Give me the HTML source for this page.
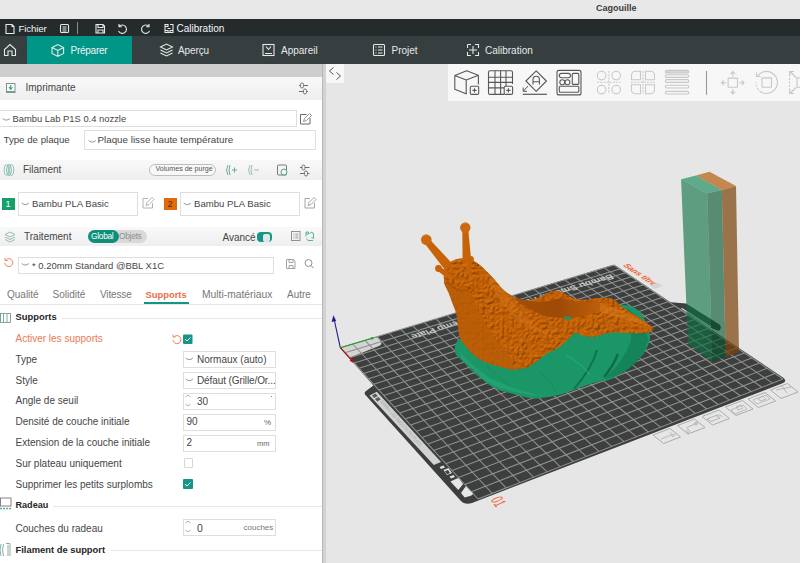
<!DOCTYPE html>
<html><head><meta charset="utf-8">
<style>
*{margin:0;padding:0;box-sizing:border-box}
html,body{width:800px;height:563px;overflow:hidden;background:#e6e6e6;font-family:"Liberation Sans",sans-serif;position:relative}
.a{position:absolute}
.t{position:absolute;white-space:nowrap;line-height:1;font-size:10px;color:#464646;z-index:2}
svg{position:absolute;overflow:visible;z-index:1}
.hdr{position:absolute;left:0;width:322px;background:linear-gradient(#f9f9f9,#eeeeee)}
.box{position:absolute;border:1px solid #dedede;background:#fff}
.wt{color:#f2f2f2}
.ic{stroke:#e8e8e8;fill:none;stroke-width:1.1}
.gi{stroke:#6b6b6b;fill:none;stroke-width:1}
.di{stroke:#c9c9c9;fill:none;stroke-width:1.2}
</style></head><body>
<!-- title bar -->
<div class="a" style="left:0;top:0;width:800px;height:19px;background:#e8e8e8"></div>
<div class="t" style="left:596px;top:4px;font-size:9px;font-weight:bold;color:#3c3c3c">Cagouille</div>
<!-- menu bar -->
<div class="a" style="left:0;top:19px;width:800px;height:17px;background:#252b2d"></div>
<svg style="left:0;top:19px" width="240" height="17">
 <path class="ic" d="M6 5.5h6l2 2v7h-8z M12 5.5v2h2"/>
 <rect class="ic" x="60.5" y="5.5" width="8" height="8" rx="1"/>
 <path class="ic" d="M62.5 8h4M62.5 10h4M62.5 12h4" stroke-width="0.9"/>
 <path d="M77.5 3v12" stroke="#8a8f90" stroke-width="1"/>
 <path class="ic" d="M96 5.5h7l1.5 1.5v7h-8.5z M98 5.5v3h5v-3 M98 14v-3h5v3"/>
 <path class="ic" d="M119 7.5a4.2 4.2 0 1 1 -0.5 4.5 M119 5v2.8h2.8"/>
 <path class="ic" d="M149 7.5a4.2 4.2 0 1 0 0.5 4.5 M149 5v2.8h-2.8"/>
 <path class="ic" d="M165 5.5h3v2h-3zM165 5.5v8h8v-8h-3M170 5.5h3v2M165 11.5h3v2M170 13.5v-2h3M167.5 9.5h3"/>
</svg>
<div class="t wt" style="left:18.5px;top:23.5px;font-size:9.6px;color:#f4f6f6;letter-spacing:-0.1px">Fichier</div>
<div class="t wt" style="left:176.5px;top:23.5px;font-size:10px;color:#f4f6f6">Calibration</div>
<!-- tab bar -->
<div class="a" style="left:0;top:36px;width:800px;height:28px;background:#363e40"></div>
<div class="a" style="left:27px;top:36px;width:105px;height:28px;background:#009687"></div>
<svg style="left:0;top:36px" width="560" height="28">
 <path class="ic" d="M4.5 19.5v-6l5.5-5 5.5 5v6h-3.5v-4.5h-4v4.5z"/>
 <path class="ic" d="M52 11.5l5.8-3 5.8 3v6l-5.8 3-5.8-3z M52 11.5l5.8 3 5.8-3 M57.8 14.5v6"/>
 <path class="ic" d="M160.5 11l6-3 6 3-6 3z M160.5 14l6 3 6-3 M160.5 17l6 3 6-3"/>
 <rect class="ic" x="263" y="8.5" width="11" height="11"/>
 <path class="ic" d="M265 17.5h7 M266 10.5l2.5 3 2.5-3"/>
 <rect class="ic" x="373.5" y="8.5" width="11" height="11" rx="1"/>
 <path class="ic" d="M375.5 11h1M378 11h4.5M375.5 14h1M378 14h4.5M375.5 17h1M378 17h4.5"/>
 <path class="ic" d="M467.5 8.5h3.5M475 8.5h3.5v3.5M478.5 16v3.5H475M471 19.5h-3.5V16M467.5 12V8.5 M473 10v8M469 14h8"/>
</svg>
<div class="t" style="left:70.5px;top:45.5px;font-size:10px;color:#f0f4f3;letter-spacing:-0.25px">Préparer</div>
<div class="t" style="left:178px;top:45.5px;font-size:10px;color:#e6e9e9;letter-spacing:-0.1px">Aperçu</div>
<div class="t" style="left:281px;top:45.5px;font-size:10px;color:#e6e9e9">Appareil</div>
<div class="t" style="left:391.5px;top:45.5px;font-size:10px;color:#e6e9e9">Projet</div>
<div class="t" style="left:485px;top:45.5px;font-size:10px;color:#e6e9e9">Calibration</div>

<!-- left panel -->
<div class="a" style="left:0;top:64px;width:322px;height:499px;background:#fff"></div>
<div class="a" style="left:0;top:64px;width:322px;height:13px;background:#cecece"></div>
<div class="a" style="left:322px;top:64px;width:4px;height:499px;background:#d2d2d2"></div>
<div class="a" style="left:322px;top:64px;width:1px;height:499px;background:#b8b8b8"></div>

<!-- Imprimante -->
<div class="hdr" style="top:77px;height:23px"></div>
<svg style="left:0;top:77px" width="322" height="23">
 <rect x="6.5" y="6.5" width="8.5" height="9" fill="#fafafa" stroke="#8e8e8e" stroke-width="1"/>
 <path d="M7 14.5h8" stroke="#4fb09a" stroke-width="1"/>
 <path d="M10.7 8v4.5M9 10l1.7 2.5 1.7-2.5" stroke="#159a86" stroke-width="1" fill="none"/>
 <path class="gi" d="M299 8.5h9M299 14.5h9"/>
 <rect x="300.5" y="6" width="3" height="5" rx="1.5" fill="#f2f2f2" stroke="#6b6b6b" stroke-width="0.9"/>
 <rect x="303.5" y="12" width="3" height="5" rx="1.5" fill="#f2f2f2" stroke="#6b6b6b" stroke-width="0.9"/>
</svg>
<div class="t" style="left:25.5px;top:83px">Imprimante</div>

<div class="box" style="left:-2px;top:110px;width:299px;height:17px"></div>
<svg style="left:0;top:105px" width="322" height="50">
 <path d="M2.7 13.5q3.6 3.2 7.2 0" stroke="#888" fill="none" stroke-width="0.9"/>
 <path class="gi" d="M300.5 9.5h6M300.5 9.5v9.5h9.5v-6" stroke="#8a8a8a"/>
 <path d="M303.5 16.5l1-3 5-5 2 2-5 5z" stroke="#8a8a8a" fill="none" stroke-width="0.9"/>
 <path d="M88.7 35.5q3.6 3.2 7.2 0" stroke="#888" fill="none" stroke-width="0.9"/>
</svg>
<div class="t" style="left:12.5px;top:114px;font-size:9.4px">Bambu Lab P1S 0.4 nozzle</div>
<div class="t" style="left:3.5px;top:134.6px;font-size:9.7px">Type de plaque</div>
<div class="box" style="left:84px;top:130px;width:232px;height:19.5px"></div>
<div class="t" style="left:97.5px;top:134.6px;font-size:9.8px">Plaque lisse haute température</div>

<!-- Filament -->
<div class="hdr" style="top:160px;height:20px"></div>
<svg style="left:0;top:160px" width="322" height="20">
 <ellipse cx="6.5" cy="10" rx="2.3" ry="5.5" fill="none" stroke="#7ab5a8" stroke-width="0.8"/>
 <ellipse cx="9" cy="10" rx="2.3" ry="5.5" fill="none" stroke="#5aa897" stroke-width="0.8"/>
 <ellipse cx="11.5" cy="10" rx="2.3" ry="5.5" fill="none" stroke="#7ab5a8" stroke-width="0.8"/>
 <path class="gi" d="M300 7.5h9.5M300 13.5h9.5"/>
 <rect x="302" y="5" width="3" height="5" rx="1.5" fill="#f2f2f2" stroke="#6b6b6b" stroke-width="0.9"/>
 <rect x="304.5" y="11" width="3" height="5" rx="1.5" fill="#f2f2f2" stroke="#6b6b6b" stroke-width="0.9"/>
 <path d="M228 5q-3 5 0 10M230 5q-2 5 0 10M232 10h5M234.5 7.5v5" stroke="#5aa897" fill="none" stroke-width="0.9"/>
 <path d="M250 5q-3 5 0 10M252 5q-2 5 0 10M254 10h5" stroke="#8fb8ae" fill="none" stroke-width="0.9"/>
 <rect x="277.5" y="5" width="9" height="10" rx="1" fill="none" stroke="#6b6b6b" stroke-width="0.9"/>
 <circle cx="284" cy="12" r="3" fill="#f2f2f2" stroke="#3aa08a" stroke-width="0.9"/>
</svg>
<div class="t" style="left:23px;top:165px">Filament</div>
<div class="a" style="left:148.5px;top:163.5px;width:67px;height:12px;border:1px solid #bdbdbd;border-radius:6px;background:#f8f8f8"></div>
<div class="t" style="left:155.5px;top:166.3px;font-size:7.1px;color:#555">Volumes de purge</div>

<div class="a" style="left:2px;top:197.5px;width:13px;height:12.5px;background:#16a16b"></div>
<div class="t" style="left:5.5px;top:199.5px;font-size:9px;color:#fff">1</div>
<div class="box" style="left:18px;top:192px;width:120px;height:24px"></div>
<div class="t" style="left:32px;top:198.7px;font-size:9.6px">Bambu PLA Basic</div>
<div class="a" style="left:164px;top:197.5px;width:13px;height:12.5px;background:#e56a05"></div>
<div class="t" style="left:167.5px;top:199.5px;font-size:9px;color:#333">2</div>
<div class="box" style="left:180px;top:192px;width:120px;height:24px"></div>
<div class="t" style="left:194px;top:198.7px;font-size:9.6px">Bambu PLA Basic</div>
<svg style="left:0;top:190px" width="322" height="30">
 <path d="M21.7 13q3.6 3.2 7.2 0" stroke="#888" fill="none" stroke-width="0.9"/>
 <path d="M183.7 13q3.6 3.2 7.2 0" stroke="#888" fill="none" stroke-width="0.9"/>
 <path d="M143 8.5h5M143 8.5v9.5h9.5v-5M146 15.5l1-3 5-5 2 2-5 5z" stroke="#aaa" fill="none" stroke-width="0.9"/>
 <path d="M305 8.5h5M305 8.5v9.5h9.5v-5M308 15.5l1-3 5-5 2 2-5 5z" stroke="#999" fill="none" stroke-width="0.9"/>
</svg>

<!-- Traitement -->
<div class="hdr" style="top:227px;height:19px"></div>
<svg style="left:0;top:227px" width="322" height="19">
 <path d="M5 7.5l5-2.5 5 2.5-5 2.5z M5 10l5 2.5 5-2.5 M5 12.5l5 2.5 5-2.5" stroke="#8fb5ac" fill="none" stroke-width="0.9"/>
 <rect x="291.5" y="4.5" width="8.5" height="9" fill="none" stroke="#888" stroke-width="0.9"/>
 <path d="M293.3 7h1M295.3 7h3M293.3 9h1M295.3 9h3M293.3 11h1M295.3 11h3" stroke="#888" stroke-width="0.8"/>
 <path d="M306 5v4.5M306 5h2.5v2h-2.5M309.5 6.5l2.5 -1.5 1.5 2M313.5 6.5v5l-2 -1M306.5 11.5l1.5 2h5" stroke="#3aa08a" fill="none" stroke-width="0.8"/>
</svg>
<div class="t" style="left:24px;top:232.2px">Traitement</div>
<div class="a" style="left:88px;top:229.5px;width:59px;height:13.5px;border-radius:7px;background:#d9d9d9"></div>
<div class="a" style="left:88px;top:229.5px;width:31px;height:13.5px;border-radius:7px;background:#0e8f7c"></div>
<div class="t" style="left:91px;top:232px;font-size:8.4px;color:#fff;letter-spacing:-0.3px">Global</div>
<div class="t" style="left:119px;top:232px;font-size:8.4px;color:#8d8d8d;letter-spacing:-0.3px">Objets</div>
<div class="t" style="left:222.5px;top:232.5px;color:#444">Avancé</div>
<div class="a" style="left:257px;top:232px;width:14.5px;height:10px;border-radius:4px;background:#159686"></div>
<div class="a" style="left:263px;top:233.5px;width:7px;height:8px;border-radius:2px;background:#dfe8e6"></div>

<div class="box" style="left:18px;top:257px;width:256px;height:17px"></div>
<svg style="left:0;top:250px" width="322" height="30">
 <path d="M4.8 13a4 4 0 1 0 1.5-3.5M5 8v2.5h2.5" stroke="#f08050" fill="none" stroke-width="1"/>
 <path d="M21.7 13.5q3.6 3.2 7.2 0" stroke="#888" fill="none" stroke-width="0.9"/>
 <path d="M286.5 9.5h7l1.5 1.5v7.5h-8.5z M289 9.5v3h4v-3 M289 18.5v-3h4v3" stroke="#9a9a9a" fill="none" stroke-width="0.9"/>
 <circle cx="308.5" cy="13" r="3.5" stroke="#888" fill="none" stroke-width="0.9"/>
 <path d="M311 15.5l2.5 2.5" stroke="#888" stroke-width="1"/>
</svg>
<div class="t" style="left:32px;top:260.5px;font-size:9.45px">* 0.20mm Standard @BBL X1C</div>

<!-- tabs -->
<div class="t" style="left:7px;top:289.5px;color:#777">Qualité</div>
<div class="t" style="left:52.5px;top:289.5px;color:#777">Solidité</div>
<div class="t" style="left:100px;top:289.5px;color:#777;letter-spacing:-0.15px">Vitesse</div>
<div class="t" style="left:145.5px;top:289.5px;color:#e8704a;font-weight:bold;font-size:9.4px">Supports</div>
<div class="t" style="left:202px;top:289.5px;color:#777;font-size:10.3px">Multi-matériaux</div>
<div class="t" style="left:287px;top:289.5px;color:#777">Autre</div>
<div class="a" style="left:0;top:304px;width:322px;height:1px;background:#e6e6e6"></div>
<div class="a" style="left:144px;top:302px;width:45px;height:2px;background:#139684"></div>

<!-- Supports section -->
<svg style="left:0;top:310px" width="322" height="253">
 <rect x="0.5" y="3.5" width="10" height="9" fill="none" stroke="#7a9e96" stroke-width="0.9"/>
 <path d="M3.5 4v8.5M7 4v8.5" stroke="#7a9e96" stroke-width="0.9"/>
 <path d="M0 4v8.5" stroke="#5ab09a" stroke-width="2"/>
 <path d="M62 8.5H322" stroke="#e8e8e8" stroke-width="1"/>
 <path d="M53 196.5H322" stroke="#e8e8e8" stroke-width="1"/>
 <path d="M111 240.5H322" stroke="#e8e8e8" stroke-width="1"/>
 <rect x="0.5" y="188" width="10.5" height="8" fill="none" stroke="#777" stroke-width="0.9"/>
 <path d="M0 198.5h11" stroke="#5ab09a" stroke-width="1.6" stroke-dasharray="2 1"/>
 <path d="M1 234q-2 6 0 12M3.5 234q-2 6 0 12M6 233.5h4v12.5M8 235v11" stroke="#7aa59b" fill="none" stroke-width="0.9"/>
</svg>
<div class="t" style="left:15.5px;top:312px;font-weight:bold;font-size:9.4px;color:#262626">Supports</div>

<div class="t" style="left:15.5px;top:333.8px;color:#ec7a55">Activer les supports</div>
<svg style="left:168px;top:330px" width="30" height="20">
 <path d="M5 10a4 4 0 1 0 1.5-3.5M5 4.5v2.5h2.5" stroke="#f08050" fill="none" stroke-width="1"/>
 <rect x="15" y="4.5" width="9.5" height="9.5" rx="1" fill="#159686"/>
 <path d="M17 9l2 2 3.5-3.5" stroke="#fff" fill="none" stroke-width="1"/>
</svg>
<div class="t" style="left:15.5px;top:355.4px">Type</div>
<div class="box" style="left:183px;top:351px;width:93px;height:17px"></div>
<div class="t" style="left:197px;top:355px">Normaux (auto)</div>
<div class="t" style="left:15.5px;top:375.9px">Style</div>
<div class="box" style="left:183px;top:372px;width:93px;height:17px"></div>
<div class="t" style="left:197px;top:375.8px;letter-spacing:-0.1px">Défaut (Grille/Or...</div>
<div class="t" style="left:15.5px;top:396.4px">Angle de seuil</div>
<div class="box" style="left:183px;top:393px;width:93px;height:17px"></div>
<div class="t" style="left:197px;top:396.5px">30</div>
<div class="t" style="left:15.5px;top:417.1px">Densité de couche initiale</div>
<div class="box" style="left:183px;top:413.5px;width:93px;height:17px"></div>
<div class="t" style="left:186.5px;top:417px">90</div>
<div class="t" style="left:264px;top:419px;font-size:8px;color:#666">%</div>
<div class="t" style="left:15.5px;top:437.6px">Extension de la couche initiale</div>
<div class="box" style="left:183px;top:434.5px;width:93px;height:17px"></div>
<div class="t" style="left:186.5px;top:438px">2</div>
<div class="t" style="left:257px;top:440px;font-size:7.5px;color:#666">mm</div>
<div class="t" style="left:15.5px;top:458.8px">Sur plateau uniquement</div>
<div class="a" style="left:183.5px;top:458px;width:9.5px;height:9.5px;border:1px solid #d6d6d6;border-radius:1px"></div>
<div class="t" style="left:15.5px;top:479.6px">Supprimer les petits surplombs</div>
<div class="a" style="left:183px;top:478.5px;width:10px;height:10px;background:#159686;border-radius:1px"></div>
<svg style="left:183px;top:478.5px" width="10" height="10"><path d="M2 5l2 2 3.5-3.5" stroke="#fff" fill="none" stroke-width="1"/></svg>
<div class="t" style="left:15.5px;top:501px;font-weight:bold;font-size:9.1px;color:#262626">Radeau</div>
<div class="t" style="left:15.5px;top:523.6px">Couches du radeau</div>
<div class="box" style="left:183px;top:519px;width:93px;height:17px"></div>
<div class="t" style="left:197px;top:522.5px;font-size:10.5px">0</div>
<div class="t" style="left:243.5px;top:523.5px;font-size:8px;color:#777">couches</div>
<div class="t" style="left:15.5px;top:545.2px;font-weight:bold;font-size:9.4px;color:#262626">Filament de support</div>
<svg style="left:183px;top:330px" width="100" height="210">
 <path d="M2.7 28q3.6 3.2 7.2 0M2.7 49q3.6 3.2 7.2 0" stroke="#888" fill="none" stroke-width="0.9"/>
 <path d="M2.5 67l2.5-2 2.5 2M2.5 74l2.5 2 2.5-2" stroke="#999" fill="none" stroke-width="0.8"/>
 <path d="M2.5 193l2.5-2 2.5 2M2.5 200l2.5 2 2.5-2" stroke="#999" fill="none" stroke-width="0.8"/>
 <path d="M88 66.5h1" stroke="#888" stroke-width="1.2"/>
</svg>

<!-- viewport -->
<div class="a" style="left:326px;top:64px;width:474px;height:499px;background:#e6e6e6"></div>
<div class="a" style="left:326px;top:64px;width:18px;height:19px;background:#f7f7f7"></div>
<svg style="left:326px;top:64px" width="18" height="19">
 <path d="M7.5 3.5l-4 3.5 4 3.5M10.5 8.5l4 3.5-4 3.5" stroke="#555" fill="none" stroke-width="1"/>
</svg>
<svg style="left:0;top:0" width="800" height="563" viewBox="0 0 800 563">
<defs>
<clipPath id="vp"><rect x="326" y="64" width="474" height="499"/></clipPath>
<linearGradient id="og" x1="0" y1="0" x2="1" y2="1"><stop offset="0" stop-color="#e07a18"/><stop offset="1" stop-color="#c45e08"/></linearGradient>
<linearGradient id="gg" x1="0" y1="0" x2="0" y2="1"><stop offset="0" stop-color="#24a877"/><stop offset="1" stop-color="#17905f"/></linearGradient>
</defs>
<g clip-path="url(#vp)">
<path d="M340.3 347.7 L611 265.5 Q614 264.5 617 266.5 L783 377.5 Q788 381.5 782 383.5 L472 503 Q465 505.5 460.5 500.5 L365 394.5 Q364 392.5 366 391 L373.4 385.6 Z" fill="#3d3f3e"/>
<path d="M668 302 L686 303.4 L719.5 324.5 Q722.5 327.5 719 331 L711 328 L681.5 309.5 Z" fill="#3d3f3e"/>
<path d="M681.5 308.3 L711 327" stroke="#e0e0e0" stroke-width="1.1" opacity="0.9"/>
<path d="M340.3 347.7L374.5 337.6Q377.5 336.8 379 338.8L381.2 342.3Q382 345 379 346L349.5 357.8Z" fill="#d3d3d3"/>
<path d="M340.3 347.7L478.0 499.0M340.3 347.7L614.0 265.0M352.7 344.0L492.2 493.4M344.9 352.7L619.7 268.9M365.0 340.3L506.1 487.9M349.5 357.8L625.5 272.8M377.1 336.6L519.9 482.5M354.2 362.9L631.4 276.7M389.1 333.0L533.5 477.2M358.9 368.2L637.4 280.8M400.9 329.4L547.0 471.9M363.7 373.5L643.4 284.8M412.7 325.8L560.2 466.7M368.6 378.8L649.5 289.0M424.3 322.3L573.3 461.5M373.6 384.3L655.7 293.1M435.8 318.9L586.2 456.4M378.7 389.9L662.0 297.4M447.1 315.4L599.0 451.4M383.8 395.5L668.3 301.7M458.4 312.0L611.6 446.4M389.0 401.2L674.8 306.0M469.5 308.7L624.0 441.6M394.3 407.0L681.3 310.4M480.5 305.3L636.3 436.7M399.7 412.9L687.9 314.9M491.4 302.0L648.4 432.0M405.1 418.9L694.6 319.4M502.2 298.8L660.4 427.2M410.6 425.0L701.4 324.0M512.9 295.5L672.2 422.6M416.3 431.2L708.3 328.6M523.5 292.3L683.9 418.0M422.0 437.5L715.3 333.4M534.0 289.2L695.4 413.4M427.8 443.9L722.4 338.1M544.3 286.1L706.8 409.0M433.7 450.4L729.6 343.0M554.6 283.0L718.1 404.5M439.7 457.0L736.9 347.9M564.7 279.9L729.3 400.1M445.8 463.7L744.3 352.9M574.8 276.9L740.3 395.8M452.1 470.5L751.8 358.0M584.7 273.8L751.1 391.5M458.4 477.4L759.5 363.1M594.6 270.9L761.9 387.3M464.8 484.5L767.2 368.3M604.3 267.9L772.5 383.1M471.3 491.7L775.0 373.6M614.0 265.0L783.0 379.0M478.0 499.0L783.0 379.0" stroke="#8f918f" stroke-width="1.05" fill="none"/>
<path d="M369.5 395.5 L376.8 391.8 L441 462 L433.8 464.9 Z" fill="#d2d2d2"/>
<text transform="matrix(0.66 0.75 -0.75 0.66 380 402)" font-family="Liberation Sans" font-size="5" fill="#a9a9a9" textLength="60" lengthAdjust="spacingAndGlyphs">BAMBU LAB  SMOOTH PEI  PLATE</text>
<path d="M372 395.5 l3.5 -2 l2.2 2.4 l-3.5 2z M375 399 l3.5 -2 l2.2 2.4 l-3.5 2z" fill="#5a5a5a"/>
<path d="M439.5 467 l4 -1.5 l1.5 2 l-4 1.5z M443.5 470 l5 -2 l3.5 5 l-5 2z M449.5 476.5 l4 -1.5 l1.5 2 l-4 1.5z" fill="#e0e0e0"/>
<path d="M445 471.2 l3 -1.2 l2 3 l-3 1.2z" fill="#3d3f3e"/>
<path d="M450.4 481.4 L457 478.5 Q458.5 478 459.5 479.2 L463.1 484.1 L458.3 490 Z" fill="#e6e6e6"/>
<path d="M461 493.1 L465.8 486.2 L473.2 493.7 Q472 495.5 470 496 L464.7 497.4 Z" fill="#e6e6e6"/>
<text transform="matrix(0.45 0.6 -1.29 0.55 490.3 499.8)" font-family="Liberation Sans" font-size="12" fill="#f26a3c">01</text>
<path d="M340.3 347.7 L334.3 320" stroke="#1c1c8c" stroke-width="1.1"/>
<path d="M333.4 315.2 L331.6 322 L336.2 321 Z" fill="#1c1c8c"/>
<path d="M340.3 347.7 L372.2 338.3" stroke="#20a020" stroke-width="1.1"/>
<circle cx="372.2" cy="338.3" r="1.3" fill="#20a020"/>
<path d="M340.3 347.7 L351.5 360" stroke="#a81414" stroke-width="1.2"/>
<path d="M349.5 360.8 L353.5 363 L353.6 358.3 Z" fill="#a81414"/>
<text transform="matrix(-0.957 0.29 -0.55 -0.62 611 274)" font-family="Liberation Sans" font-weight="bold" font-size="10" fill="#cacaca" textLength="210" lengthAdjust="spacingAndGlyphs">Bambu Smooth PEI Plate / High Temp Plate</text>
<text transform="matrix(0.78 0.52 -0.95 0.38 622.5 265.5)" font-family="Liberation Sans" font-size="8.5" font-weight="bold" fill="#f0602e">Sans titre</text>
<path d="M650 285.5 l8 -3 l4.5 3.5 l-8 3z" fill="#d4d4d4"/>
<path d="M653.0 435.0 L670.0 428.5 L680.5 437.0 L663.5 443.5 Z" fill="none" stroke="#a6a6a6" stroke-width="0.9" stroke-linejoin="round"/>
<path d="M677.5 425.5 L694.5 419.0 L705.0 427.5 L688.0 434.0 Z" fill="none" stroke="#a6a6a6" stroke-width="0.9" stroke-linejoin="round"/>
<path d="M702.0 416.5 L719.0 410.0 L729.5 418.5 L712.5 425.0 Z" fill="none" stroke="#a6a6a6" stroke-width="0.9" stroke-linejoin="round"/>
<path d="M725.5 407.0 L742.5 400.5 L753.0 409.0 L736.0 415.5 Z" fill="none" stroke="#a6a6a6" stroke-width="0.9" stroke-linejoin="round"/>
<path d="M748.0 399.0 L765.0 392.5 L775.5 401.0 L758.5 407.5 Z" fill="none" stroke="#a6a6a6" stroke-width="0.9" stroke-linejoin="round"/>
<path d="M770.5 390.0 L787.5 383.5 L798.0 392.0 L781.0 398.5 Z" fill="none" stroke="#a6a6a6" stroke-width="0.9" stroke-linejoin="round"/>
<path d="M661 439 L674 434 M670 432 L673 437 L676 433" stroke="#b0b0b0" stroke-width="0.8" fill="none"/>
<path d="M686 428 L697 423 M688 429.5 a1.5 1.5 0 1 0 0.1 0 M696 422 a1.5 1.5 0 1 0 0.1 0" stroke="#a8a8a8" stroke-width="0.8" fill="none"/>
<path d="M707 419 L716 415.5 L720 418 L711 421.5Z M716 415.5 Q721 414 722 417" stroke="#a8a8a8" stroke-width="0.8" fill="none"/>
<path d="M731 410 L743 405 L747 409 L735 414Z M736 407 L741 405 L743 408 L738 410Z" stroke="#b0b0b0" stroke-width="0.8" fill="none"/>
<path d="M753 400 L766 395 L770 399 L757 404Z M758 399 L763 396 L766 399 L761 401Z" stroke="#b0b0b0" stroke-width="0.8" fill="none"/>
<path d="M776 390 L791 387 M781 385 L787 393" stroke="#a8a8a8" stroke-width="0.8" fill="none"/>
<g id="snail">
<path d="M459.4 339.4C455.2 341.5 455.6 345.1 455.0 347.5C454.4 349.9 454.6 351.7 455.6 353.8C456.6 355.8 458.6 357.7 461.2 360.0C463.9 362.3 468.3 365.0 471.2 367.5C474.2 370.0 476.0 372.3 478.8 375.0C481.5 377.7 484.4 381.4 487.5 383.8C490.6 386.1 493.3 387.7 497.5 389.4C501.7 391.1 506.9 392.3 512.5 393.8C518.1 395.2 525.4 397.7 531.0 398.3C536.6 398.9 541.0 397.9 546.3 397.2C551.5 396.5 557.1 395.4 562.5 393.9C567.9 392.4 573.4 390.1 578.8 388.2C584.2 386.3 589.6 384.0 595.0 382.5C600.4 381.0 606.4 380.9 611.3 379.0C616.2 377.1 620.2 374.0 624.3 371.1C628.4 368.2 632.5 364.4 635.7 361.4C639.0 358.4 641.4 357.2 643.8 353.3C646.2 349.4 649.6 343.2 650.0 338.0C650.4 332.8 647.7 326.3 646.0 322.0C644.3 317.7 642.7 314.7 640.0 312.0C637.3 309.3 634.0 307.2 630.0 306.0C626.0 304.8 621.0 304.3 616.0 305.0C611.0 305.7 606.0 307.2 600.0 310.0C594.0 312.8 586.7 318.3 580.0 322.0C573.3 325.7 570.0 328.2 560.0 332.0C550.0 335.8 533.3 344.5 520.0 345.0C506.7 345.5 490.1 335.9 480.0 335.0C469.9 334.1 463.6 337.3 459.4 339.4Z" fill="#1b9666"/>
<path d="M628 309 Q646 322 648 340 Q644 358 628 370 Q614 378 604 379 Q624 362 631 340 Q632 322 620 312Z" fill="#137c52" opacity="0.7"/>
<path d="M597 350 Q592 368 574 389" stroke="#0e6a44" stroke-width="1.8" fill="none" opacity="0.85"/>
<path d="M618 354 Q612 368 604 377" stroke="#0c6040" stroke-width="2.4" fill="none" opacity="0.8"/>
<path d="M460 352 Q470 364 490 378 Q520 392 545 396 Q505 394 480 378 Q462 365 460 352Z" fill="#2aa97a" opacity="0.6"/>
<path d="M486 365 Q498 378 510 386" stroke="#178a5b" stroke-width="0.9" fill="none"/>
<path d="M540 372 Q552 382 556 392" stroke="#178a5b" stroke-width="0.9" fill="none"/>
<path d="M566 355 Q580 362 590 375" stroke="#2db080" stroke-width="1.3" fill="none" opacity="0.6"/>
<defs><filter id="bump" x="-5%" y="-5%" width="110%" height="110%" color-interpolation-filters="sRGB"><feTurbulence type="turbulence" baseFrequency="0.2" numOctaves="2" seed="4" result="n"/><feDiffuseLighting in="n" lighting-color="#ffffff" surfaceScale="1.5" result="L"><feDistantLight azimuth="235" elevation="55"/></feDiffuseLighting><feComposite in="L" in2="SourceGraphic" operator="arithmetic" k1="0.62" k2="0" k3="0.42" k4="0" result="M"/><feComposite in="M" in2="SourceAlpha" operator="in"/></filter></defs>
<path d="M444.0 270.0C444.8 266.7 447.0 264.6 449.0 263.0C451.0 261.4 453.5 261.2 456.0 260.5C458.5 259.8 461.2 258.5 464.0 259.0C466.8 259.5 469.5 262.0 472.6 263.5C475.7 265.0 479.3 265.6 482.6 267.8C485.9 270.1 489.2 273.6 492.5 277.0C495.8 280.4 499.1 285.3 502.4 288.4C505.6 291.5 508.6 293.6 512.0 295.7C515.4 297.8 518.2 300.6 522.5 301.0C526.8 301.4 533.0 299.5 537.5 298.0C542.0 296.5 546.2 293.2 549.5 292.0C552.8 290.8 554.2 290.1 557.0 290.5C559.8 290.9 563.0 292.8 566.0 294.2C569.0 295.6 571.5 297.8 575.0 298.7C578.5 299.6 583.2 299.6 587.0 299.5C590.8 299.4 593.3 298.1 597.5 298.0C601.7 297.9 608.0 297.0 612.4 298.7C616.8 300.4 619.4 304.8 624.0 308.0C628.6 311.2 635.7 315.2 640.0 318.0C644.3 320.8 647.7 323.2 650.0 325.0C652.3 326.8 654.3 327.7 654.0 329.0C653.7 330.3 651.7 332.2 648.0 333.0C644.3 333.8 638.2 333.5 632.0 333.5C625.8 333.5 616.8 332.4 610.5 333.0C604.2 333.6 598.6 336.5 594.0 337.0C589.4 337.5 586.2 336.6 583.0 336.0C579.8 335.4 577.8 332.6 575.0 333.5C572.2 334.4 569.3 338.9 566.5 341.3C563.7 343.7 561.6 345.7 558.0 348.0C554.4 350.3 548.4 352.8 545.0 355.0C541.6 357.2 540.4 358.9 537.5 361.0C534.6 363.1 531.2 366.1 527.5 367.5C523.8 368.9 519.2 369.4 515.0 369.4C510.8 369.4 507.1 368.6 502.5 367.5C497.9 366.4 492.1 364.9 487.5 363.0C482.9 361.1 479.4 359.8 475.0 356.0C470.6 352.2 463.8 344.3 461.0 340.0C458.2 335.7 459.2 334.3 458.4 330.0C457.6 325.7 457.2 318.3 456.3 314.0C455.4 309.7 454.0 307.6 452.7 304.0C451.4 300.4 449.9 296.2 448.5 292.6C447.1 289.1 444.9 286.5 444.2 282.7C443.4 278.9 443.2 273.3 444.0 270.0Z" fill="#d06808" filter="url(#bump)"/>
<path d="M512.0 296.0C511.1 295.7 518.2 300.7 522.5 301.0C526.8 301.3 533.0 299.5 537.5 298.0C542.0 296.5 546.2 293.2 549.5 292.0C552.8 290.8 554.2 290.1 557.0 290.5C559.8 290.9 563.0 292.8 566.0 294.2C569.0 295.6 571.5 297.8 575.0 298.7C578.5 299.6 583.2 299.6 587.0 299.5C590.8 299.4 593.3 298.1 597.5 298.0C601.7 297.9 611.3 297.4 612.4 298.7C613.5 300.0 607.7 305.1 604.0 306.0C600.3 306.9 596.2 304.5 590.0 304.0C583.8 303.5 574.5 303.0 567.0 303.0C559.5 303.0 551.5 304.0 545.0 304.0C538.5 304.0 533.5 304.3 528.0 303.0C522.5 301.7 512.9 296.3 512.0 296.0Z" fill="#d06808" filter="url(#bump)"/>
<defs><linearGradient id="chg" x1="0" y1="0" x2="1" y2="0"><stop offset="0" stop-color="#a54f07"/><stop offset="0.45" stop-color="#9c4a06"/><stop offset="1" stop-color="#c2600c"/></linearGradient></defs>
<path d="M516.0 298.0C517.8 297.8 525.2 300.4 530.0 301.0C534.8 301.6 540.0 301.9 545.0 301.5C550.0 301.1 555.0 298.6 560.0 298.5C565.0 298.4 570.0 300.4 575.0 301.0C580.0 301.6 585.0 301.6 590.0 302.0C595.0 302.4 602.8 302.2 605.0 303.5C607.2 304.8 605.5 307.8 603.0 309.5C600.5 311.2 595.5 312.6 590.0 314.0C584.5 315.4 577.0 317.6 570.0 318.0C563.0 318.4 554.7 317.9 548.0 316.5C541.3 315.1 534.8 311.8 530.0 309.5C525.2 307.2 521.3 304.4 519.0 302.5C516.7 300.6 514.2 298.2 516.0 298.0Z" fill="url(#chg)"/>
<path d="M563 317 Q568 315 572 318 L568 321Z" fill="#1b9666"/>
<path d="M444.2 281.0C442.6 282.4 447.1 288.8 448.5 292.6C449.9 296.4 451.4 300.4 452.7 304.0C454.0 307.6 455.4 309.7 456.3 314.0C457.2 318.3 457.6 325.7 458.4 330.0C459.2 334.3 458.2 335.7 461.0 340.0C463.8 344.3 470.6 352.2 475.0 356.0C479.4 359.8 482.9 361.1 487.5 363.0C492.1 364.9 497.9 366.4 502.5 367.5C507.1 368.6 513.8 371.3 515.0 369.4C516.2 367.5 512.2 359.9 510.0 356.0C507.8 352.1 505.0 349.8 502.0 346.0C499.0 342.2 495.2 337.5 492.0 333.0C488.8 328.5 485.8 324.0 483.0 319.0C480.2 314.0 477.3 307.8 475.0 303.0C472.7 298.2 471.8 293.2 469.0 290.0C466.2 286.8 462.1 285.5 458.0 284.0C453.9 282.5 445.8 279.6 444.2 281.0Z" fill="#b85c08" opacity="0.8"/>
<path d="M478 268 Q498 280 515 305 Q530 325 560 340 Q520 330 500 300Z" fill="#d9781c" opacity="0.35"/>
<path d="M600 303 Q630 312 652 327 Q630 322 600 312Z" fill="#de7d22" opacity="0.45"/>
<path d="M443 272 Q446 262 456 259 Q468 256 476 262 Q486 268 490 278 Q482 288 468 290 Q452 290 445 282Z" fill="#d06808" filter="url(#bump)"/>
<path d="M446 278 Q452 290 462 291 Q472 290 478 284" stroke="#9a4806" stroke-width="1.6" fill="none" opacity="0.55"/>
<path d="M423.6 242.0L428.4 238.0L451.7 262.9L444.3 269.1Z" fill="#c86208"/>
<path d="M462.3 227.6L468.1 227.4L471.4 262.8L462.6 263.2Z" fill="#c86208"/>
<circle cx="426.3" cy="239.8" r="5.3" fill="#cc6810"/>
<circle cx="465.3" cy="227.6" r="5.2" fill="#cc6810"/>
<path d="M423 236 Q425 234.5 428 235" stroke="#e08a30" stroke-width="1.2" fill="none" opacity="0.7"/>
<path d="M462.5 224 Q464.5 222.5 467 223" stroke="#e08a30" stroke-width="1.2" fill="none" opacity="0.7"/>
<circle cx="438.5" cy="268.5" r="3.4" fill="#c86208"/>
<path d="M438.5 268.5 L450 277" stroke="#c86208" stroke-width="5" stroke-linecap="round"/>
<circle cx="470.5" cy="259.5" r="3.4" fill="#c86208"/>
<path d="M470.5 259.5 L467.6 272" stroke="#c4620c" stroke-width="4.5" stroke-linecap="round"/>
</g>
<g>
<path d="M681.1 179.2L707.2 193.4L712.4 361.7L688.0 344.0Z" fill="rgb(9,111,65)" opacity="0.62"/>
<path d="M707.2 193.4L721.8 189.9L725.7 356.9L712.4 361.7Z" fill="rgb(0,82,43)" opacity="0.62"/>
<path d="M721.8 189.9L736.0 186.0L739.0 352.4L725.7 356.9Z" fill="rgb(123,66,9)" opacity="0.7"/>
<path d="M681.1 179.2L696.0 175.4L721.8 189.9L707.2 193.4Z" fill="rgb(12,132,82)" opacity="0.62"/>
<path d="M696.0 175.4L709.5 171.7L736.0 186.0L721.8 189.9Z" fill="rgb(180,94,16)" opacity="0.7"/>
</g>
</g>
</svg>
<!-- toolbar -->
<div class="a" style="left:448px;top:64px;width:352px;height:37.2px;background:#f7f7f7"></div>
<svg style="left:0;top:0" width="800" height="110">
 <g stroke="#585858" stroke-width="1.1" fill="none" stroke-linejoin="round">
  <path d="M454.8 75.6L466.6 70.8L478.4 75.2L466.2 80ZM454.8 75.6V89.2L466.6 94M466.2 80V94M478.4 75.2V84.4"/>
  <rect x="470.3" y="86.3" width="8.4" height="8.1" rx="1.2"/>
  <path d="M474.5 88.3v4.2M472.4 90.4h4.2"/>
  <path d="M504 94.4H490a1.5 1.5 0 0 1-1.5-1.5V72.3a1.5 1.5 0 0 1 1.5-1.5H511a1.5 1.5 0 0 1 1.5 1.5V84"/>
  <path d="M495 70.8V94.4M500.6 70.8V94.4M506 70.8V86M488.5 77.2H512.6M488.5 82.4H512.6M488.5 87.9H504"/>
  <rect x="504.2" y="86.3" width="8.4" height="8.1" rx="1.2" fill="#f7f7f7"/>
  <path d="M508.4 88.3v4.2M506.3 90.4h4.2"/>
  <path d="M536.2 70.8L546.4 81L536.2 91.4L525.9 81Z"/>
  <path d="M533 84.4V79.5a3.2 3.2 0 0 1 6.4 0V84.4M533 81.8h6.4"/>
  <path d="M528 86L523.5 91M523.2 87.5V91.3H527" stroke-width="1"/>
  <path d="M522.8 94.3H546.9" stroke-width="1.2"/>
  <rect x="557" y="70.4" width="24" height="24.5" rx="2"/>
  <rect x="559.3" y="73.4" width="11.2" height="4.4" rx="2.2"/>
  <circle cx="562.3" cy="82.2" r="2.5"/><circle cx="567.4" cy="82.2" r="2.5"/>
  <rect x="572.3" y="73.4" width="6.5" height="11" rx="1"/>
  <rect x="559.3" y="86.2" width="19.5" height="6" rx="1"/>
 </g>
 <g stroke="#c8c8c8" stroke-width="1.1" fill="none">
  <circle cx="601.6" cy="75.6" r="4.3"/><circle cx="616.2" cy="75.6" r="4.3"/>
  <circle cx="601.6" cy="89.6" r="4.3"/><circle cx="616.2" cy="89.6" r="4.3"/>
  <path d="M597 82.3H621M608.9 71V94" stroke-dasharray="2 1.2"/>
  <path d="M640.5 71.2H635.5a4 4 0 0 0-4 4V79.8H640.5Z M645.5 71.2H650.5a4 4 0 0 1 4 4V79.8H645.5Z M640.5 93.8H635.5a4 4 0 0 1-4-4V84.8H640.5Z M645.5 93.8H650.5a4 4 0 0 0 4-4V84.8H645.5Z"/>
  <path d="M631 82.3H655M643 71V94" stroke-dasharray="2 1.2"/>
  <rect x="665.3" y="70.4" width="23.4" height="2.6" rx="1.3" fill="#d6d6d6"/>
  <rect x="665.3" y="74.8" width="23.4" height="2.6" rx="1.3"/>
  <rect x="665.3" y="79.6" width="23.4" height="2.8" rx="1.3"/>
  <rect x="665.3" y="85.2" width="23.4" height="2.8" rx="1.3"/>
  <rect x="665.3" y="91.4" width="23.4" height="2.6" rx="1.3"/>
  <rect x="728.1" y="78.1" width="9.4" height="9.2" rx="0.5"/>
  <path d="M732.8 71.5V76.5M730.5 73.8l2.3-2.3 2.3 2.3M732.8 89V94M730.5 91.7l2.3 2.3 2.3-2.3M721.5 82.7H726.5M723.8 80.4l-2.3 2.3 2.3 2.3M739 82.7H744M741.7 80.4l2.3 2.3-2.3 2.3"/>
  <rect x="762" y="77.9" width="9.5" height="9.4" rx="0.5"/>
  <path d="M757.5 76A11 11 0 1 1 761 92" />
  <path d="M761 92A11 11 0 0 1 756 82" stroke-dasharray="2 1.5"/>
  <path d="M756.5 72.5V76.5H760.5"/>
  <path d="M789.5 71V94" stroke-dasharray="2 1.5"/>
  <path d="M790 71.5L796 77.5M790 93.5L796 87.5M790 71.5h4M790 71.5v4M790 93.5h4M790 93.5v-4"/>
  <rect x="797" y="77.9" width="9" height="9.4"/>
 </g>
 <path d="M706.5 71V94.8" stroke="#9a9a9a" stroke-width="1.1"/>
</svg>
</body></html>
